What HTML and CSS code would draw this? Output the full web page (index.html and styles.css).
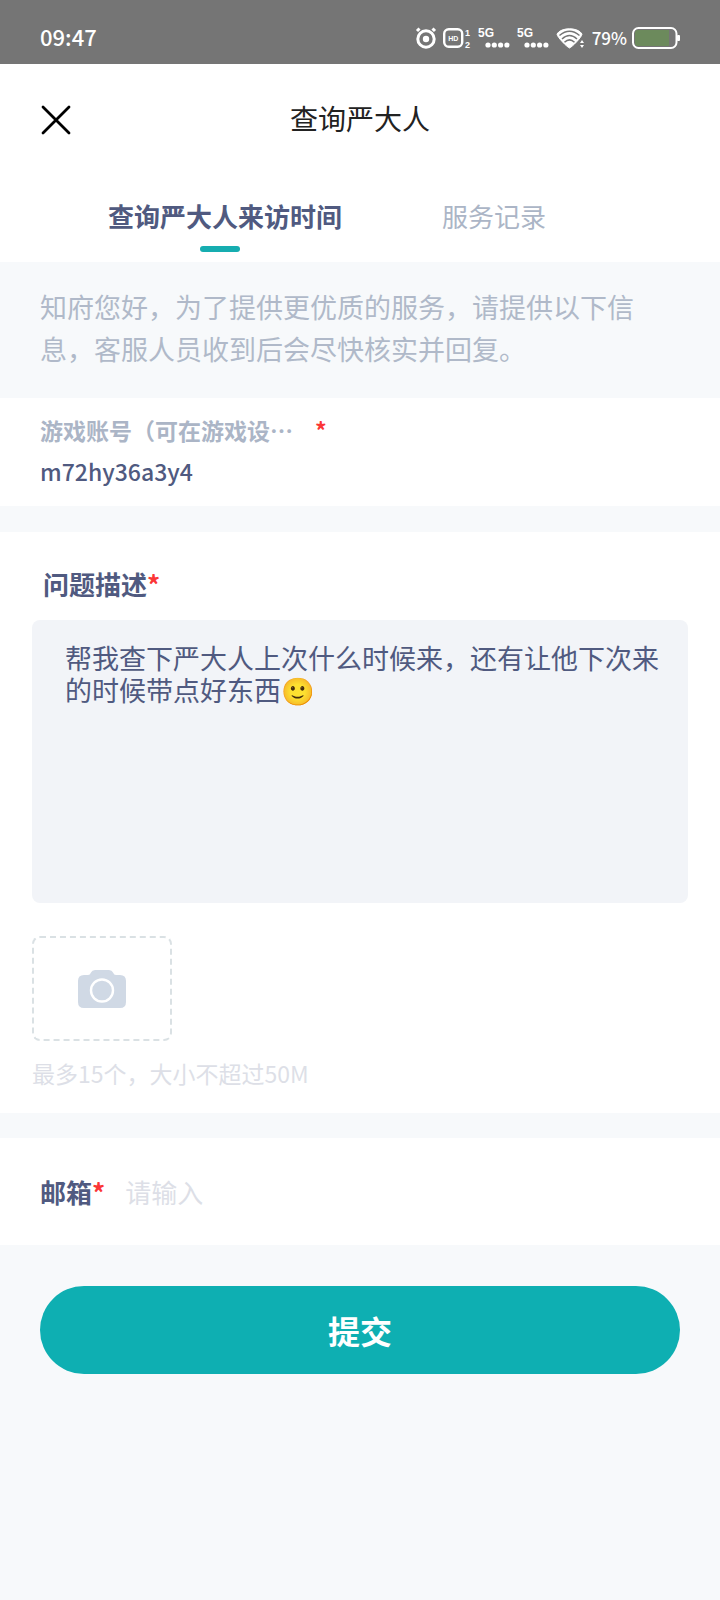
FILE: index.html
```html
<!DOCTYPE html>
<html lang="zh-CN">
<head>
<meta charset="utf-8">
<meta name="viewport" content="width=device-width, initial-scale=1">
<title>查询严大人</title>
<link rel="stylesheet" href="styles.css">
</head>
<body>
<div class="status">
  <time class="clock">09:47</time>
  <div class="status-icons">
    <svg class="alarm" width="20" height="22" viewBox="0 0 20 22" fill="none" stroke="#fff"><circle cx="10" cy="12" r="8.200" stroke-width="3"/><path d="M1 4 3.500 1.500M19 4 16.500 1.500" stroke-width="3"/><circle cx="10" cy="12" r="3.200" fill="#fff" stroke="none"/></svg>
    <svg class="hd" width="28" height="22" viewBox="0 0 28 22"><rect x="1.200" y="2.200" width="18" height="17.600" rx="4.500" fill="none" stroke="#fff" stroke-width="2.400"/><text class="tiny" x="10.200" y="14" text-anchor="middle">HD</text><text class="sim" x="22" y="9">1</text><text class="sim" x="22" y="21">2</text></svg>
    <svg class="signal" width="32" height="22" viewBox="0 0 32 22" fill="#fff"><text class="net" x="0" y="10">5G</text><circle cx="10" cy="18" r="2.600"/><circle cx="16.300" cy="18" r="2.600"/><circle cx="22.600" cy="18" r="2.600"/><circle cx="28.900" cy="18" r="2.600"/></svg>
    <svg class="signal" width="32" height="22" viewBox="0 0 32 22" fill="#fff"><text class="net" x="0" y="10">5G</text><circle cx="10" cy="18" r="2.600"/><circle cx="16.300" cy="18" r="2.600"/><circle cx="22.600" cy="18" r="2.600"/><circle cx="28.900" cy="18" r="2.600"/></svg>
    <svg class="wifi" width="29" height="22" viewBox="0 0 29 22"><path d="M1 7C5 0 22 0 26 7 26 10 16 20 13.500 21 11 20 1 10 1 7Z" fill="#fff" stroke="#fff" stroke-linejoin="round"/><path d="M3.500 8.500Q13.500 0 23.500 8.500M6 12Q13.500 5 21 12M8.500 15.200Q13.500 10.500 18.500 15.200" fill="none" stroke="#757575" stroke-width="1.500"/><path d="m26 13 2 3h-4zm0 8 2-3h-4z" fill="#fff"/></svg>
    <span class="percent">79%</span>
    <svg class="battery" width="48" height="22" viewBox="0 0 48 22"><rect x="1" y="1" width="43.500" height="20" rx="5.500" fill="none" stroke="#fff" stroke-width="2"/><path d="M6 3H37V19H6Q3 19 3 16V6Q3 3 6 3Z" fill="#6c8a5c"/><rect x="45" y="8" width="3" height="6" rx="1" fill="#fff"/></svg>
  </div>
</div>

<header class="header">
  <button class="close" type="button" aria-label="关闭"><svg width="32" height="32" viewBox="0 0 32 32"><path d="M3 3 29 29M29 3 3 29" stroke="#000" stroke-width="2.800" stroke-linecap="round"/></svg></button>
  <h1 class="title">查询严大人</h1>
</header>
<nav class="tabs">
  <button class="tab tab-active" type="button">查询严大人来访时间</button>
  <button class="tab" type="button">服务记录</button>
</nav>

<p class="notice">知府您好，为了提供更优质的服务，请提供以下信息，客服人员收到后会尽快核实并回复。</p>

<form class="form">
  <section class="panel account">
    <div class="account-head">
      <label class="account-label" for="account">游戏账号（可在游戏设⋯</label>
      <span class="star">*</span>
    </div>
    <input class="account-value" id="account" type="text" value="m72hy36a3y4">
  </section>

  <section class="panel issue">
    <label class="label issue-label" for="issue">问题描述<span class="star">*</span></label>
    <textarea class="issue-text" id="issue">帮我查下严大人上次什么时候来，还有让他下次来的时候带点好东西🙂</textarea>
    <button class="upload" type="button" aria-label="上传图片"><svg width="48" height="38" viewBox="0 0 48 38"><path d="M6 5H10Q12 5 13 2.500 14 0 17 0H31Q34 0 35 2.500 36 5 38 5H42Q48 5 48 11V32Q48 38 42 38H6Q0 38 0 32V11Q0 5 6 5Z" fill="#d0d9e5"/><circle cx="24" cy="20.500" r="11" fill="none" stroke="#fff" stroke-width="2.400"/></svg></button>
    <p class="hint">最多15个，大小不超过50M</p>
  </section>

  <section class="panel email">
    <label class="label" for="email">邮箱<span class="star">*</span></label>
    <input class="email-input" id="email" type="email" placeholder="请输入">
  </section>

  <button class="submit" type="button">提交</button>
</form>
</body>
</html>
```
FILE: styles.css
```css
* {
  box-sizing: border-box;
}

body {
  margin: 0;
  min-height: 100vh;
  background: #f7f9fb;
  color: #505a80;
  font-family: "Noto Sans CJK SC", sans-serif;
  font-size: 26px;
}

button,
input,
textarea {
  margin: 0;
  padding: 0;
  border: 0;
  background: none;
  color: inherit;
  font: inherit;
  outline: 0;
}

svg {
  display: block;
  flex: none;
  overflow: visible;
}

.status {
  display: flex;
  align-items: center;
  justify-content: space-between;
  height: 64px;
  padding: 12px 40px 0;
  background: #757575;
  color: #fff;
}

.clock {
  padding-bottom: 4px;
  font-size: 22px;
  font-weight: 500;
  line-height: 44px;
}

.status-icons {
  display: flex;
  align-items: center;
  gap: 7px;
}

.percent {
  font-size: 17px;
  font-weight: 500;
  line-height: 24px;
}

.battery {
  margin-left: -2px;
}

.tiny,
.sim,
.net {
  fill: #fff;
  font-family: "Liberation Sans", sans-serif;
  font-weight: 700;
}

.tiny {
  font-size: 7px;
}

.sim {
  font-size: 9px;
}

.net {
  font-size: 12px;
}

.header {
  display: grid;
  grid-template-columns: 32px 1fr 32px;
  align-items: center;
  height: 112px;
  padding: 0 40px;
  background: #fff;
}

.title {
  margin: 0;
  padding-bottom: 4px;
  color: #222;
  font-size: 28px;
  font-weight: 400;
  line-height: 40px;
  text-align: center;
}

.tabs {
  display: flex;
  gap: 100px;
  height: 86px;
  padding: 0 108px;
  background: #fff;
}

.tab {
  position: relative;
  padding-bottom: 8px;
  color: #abb5c6;
  white-space: nowrap;
}

.tab-active {
  color: #505a80;
  font-weight: 700;
}

.tab-active::after {
  content: "";
  position: absolute;
  bottom: 10px;
  left: 48%;
  width: 40px;
  height: 6px;
  margin-left: -20px;
  border-radius: 3px;
  background: #16adb0;
}

.notice {
  margin: 0;
  padding: 24px 40px 28px;
  color: #b0b9c9;
  font-size: 27px;
  line-height: 42px;
}

.form {
  display: flex;
  flex-direction: column;
}

.panel {
  margin-bottom: 25px;
  background: #fff;
}

.star {
  color: #fb3636;
}

.account {
  margin-bottom: 26px;
  padding: 14px 40px 13px;
}

.account-head {
  display: flex;
  gap: 22px;
  font-size: 23px;
  font-weight: 700;
  line-height: 36px;
}

.account-label {
  color: #abb5c6;
}

.account-value {
  display: block;
  width: 100%;
  height: 45px;
  font-size: 23px;
  font-weight: 500;
}

.label {
  font-weight: 700;
  line-height: 40px;
}

.issue {
  display: flex;
  flex-direction: column;
  align-items: flex-start;
  padding: 32px 32px 20px;
}

.issue-label {
  padding-left: 11px;
}

.issue-text {
  width: 100%;
  height: 283px;
  margin: 16px 0 33px;
  padding: 22px 24px 22px 33px;
  border-radius: 8px;
  background: #f2f4f8;
  font-size: 27px;
  line-height: 32px;
  resize: none;
}

.upload {
  display: grid;
  place-items: center;
  width: 140px;
  height: 105px;
  border: 2px dashed #dae1e4;
  border-radius: 8px;
}

.hint {
  margin: 14px 0 0;
  padding-bottom: 2px;
  color: #dddfe7;
  font-size: 23px;
  line-height: 36px;
}

.email {
  display: flex;
  align-items: center;
  gap: 20px;
  height: 107px;
  margin-bottom: 41px;
  padding: 0 40px;
}

.email-input {
  flex: 1;
  min-width: 0;
  height: 40px;
}

.email-input::placeholder {
  color: #dddfe7;
}

.submit {
  height: 88px;
  margin: 0 40px;
  border-radius: 44px;
  background: #0eafb2;
  color: #fff;
  font-size: 32px;
  font-weight: 700;
}
```
